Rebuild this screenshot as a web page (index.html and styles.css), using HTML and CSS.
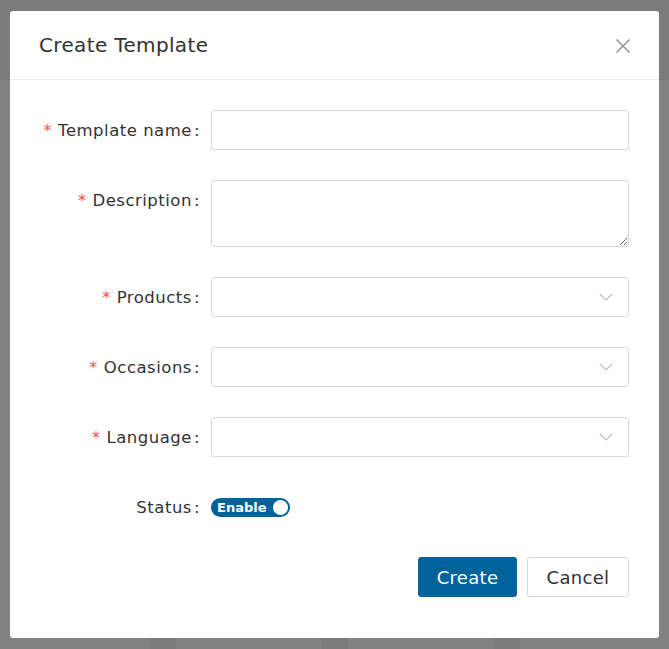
FILE: index.html
```html
<!DOCTYPE html>
<html lang="en">
  <head>
    <meta charset="UTF-8" />
    <title>Create Template</title>
    <link rel="stylesheet" href="styles.css">
  </head>
  <body>
    <div class="backdrop">
      <div class="bg-card"></div>
      <div class="bg-card"></div>
      <div class="bg-card"></div>
      <div class="bg-card"></div>
    </div>

    <div class="overlay">
      <div class="modal">
        <div class="modal-header">
          <h2>Create Template</h2>
          <button class="close" type="button" aria-label="Close">
            <svg width="16" height="16" viewBox="0 0 16 16">
              <path d="M1.5 1.5 L14.5 14.5 M14.5 1.5 L1.5 14.5" stroke="#8c8c8c" stroke-width="1.4" fill="none" />
            </svg>
          </button>
        </div>

        <form class="modal-body">
          <div class="form-row">
            <label><span class="req">*</span>Template name<span class="colon">:</span></label>
            <input type="text" class="field" />
          </div>

          <div class="form-row">
            <label><span class="req">*</span>Description<span class="colon">:</span></label>
            <textarea class="field area"></textarea>
          </div>

          <div class="form-row">
            <label><span class="req">*</span>Products<span class="colon">:</span></label>
            <div class="field select">
              <svg width="14" height="8" viewBox="0 0 14 8">
                <path d="M1 1 L7 7 L13 1" stroke="#bfbfbf" stroke-width="1.2" fill="none" />
              </svg>
            </div>
          </div>

          <div class="form-row">
            <label><span class="req">*</span>Occasions<span class="colon">:</span></label>
            <div class="field select">
              <svg width="14" height="8" viewBox="0 0 14 8">
                <path d="M1 1 L7 7 L13 1" stroke="#bfbfbf" stroke-width="1.2" fill="none" />
              </svg>
            </div>
          </div>

          <div class="form-row">
            <label><span class="req">*</span>Language<span class="colon">:</span></label>
            <div class="field select">
              <svg width="14" height="8" viewBox="0 0 14 8">
                <path d="M1 1 L7 7 L13 1" stroke="#bfbfbf" stroke-width="1.2" fill="none" />
              </svg>
            </div>
          </div>

          <div class="form-row">
            <label>Status<span class="colon">:</span></label>
            <div class="toggle-wrap">
              <span class="toggle">
                <span class="toggle-text">Enable</span>
                <span class="knob"></span>
              </span>
            </div>
          </div>

          <div class="actions">
            <button type="submit" class="btn primary">Create</button>
            <button type="button" class="btn">Cancel</button>
          </div>
        </form>
      </div>
    </div>
  </body>
</html>
```

FILE: styles.css
```css
body {
  margin: 0;
  background-color: #828282;
  font-family: "DejaVu Sans", "Noto Sans", sans-serif;
  color: #333;
}
.backdrop {
  display: grid;
  grid-template-columns: 149px 145px 145px 1fr;
  column-gap: 27px;
  padding-top: 80px;
  height: 649px;
  box-sizing: border-box;
  background-color: #7c7c7c;
}
.bg-card {
  background-color: #828282;
}
.overlay {
  position: fixed;
  inset: 0;
  padding: 11px 10px;
}
.modal {
  width: 649px;
  background-color: #fff;
  border-radius: 3px;
}
.modal-header {
  height: 68px;
  padding: 0 28px 0 29px;
  display: flex;
  align-items: center;
  justify-content: space-between;
  border-bottom: 1px solid #ececec;
}
.modal-header h2 {
  margin: 0;
  font-size: 20px;
  font-weight: 400;
  letter-spacing: 0.35px;
  color: #333;
}
.close {
  border: none;
  background: none;
  padding: 0;
  width: 16px;
  height: 16px;
  margin-top: 2px;
}
.modal-body {
  padding: 30px 30px 41px;
}
.form-row {
  display: grid;
  grid-template-columns: 162px 418px;
  column-gap: 9px;
  margin-bottom: 30px;
}
.form-row label {
  display: flex;
  justify-content: flex-end;
  align-items: center;
  height: 40px;
  font-size: 16.5px;
  letter-spacing: 0.5px;
  color: #333;
  white-space: nowrap;
}
.req {
  color: #ff4d4f;
  font-size: 16px;
  line-height: 1;
  margin-right: 6px;
  position: relative;
  top: 1px;
}
.colon {
  margin-left: 2px;
  margin-right: 2px;
}
.field {
  box-sizing: border-box;
  width: 418px;
  height: 40px;
  border: 1px solid #d9d9d9;
  border-radius: 3px;
  background-color: #fff;
  font: inherit;
  margin: 0;
}
.area {
  height: 67px;
  display: block;
  resize: vertical;
}
.select {
  display: flex;
  align-items: center;
  justify-content: flex-end;
  padding-right: 15px;
}
.toggle-wrap {
  display: flex;
  align-items: center;
  height: 40px;
}
.toggle {
  display: flex;
  align-items: center;
  justify-content: space-between;
  box-sizing: border-box;
  width: 79px;
  height: 19px;
  padding: 0 2px 0 6px;
  border-radius: 10px;
  background-color: #00629a;
}
.toggle-text {
  color: #fff;
  font-size: 13px;
  font-weight: 700;
}
.knob {
  width: 15px;
  height: 15px;
  border-radius: 50%;
  background-color: #fff;
}
.actions {
  display: flex;
  justify-content: flex-end;
  gap: 10px;
}
.btn {
  height: 40px;
  padding: 0;
  border: 1px solid #d9d9d9;
  border-radius: 3px;
  background-color: #fff;
  color: #333;
  font: inherit;
  font-size: 18px;
  letter-spacing: 0.3px;
}
.btn.primary {
  width: 99px;
  border-color: #00629a;
  background-color: #00629a;
  color: #fff;
}
.btn:last-child {
  width: 102px;
}
```
